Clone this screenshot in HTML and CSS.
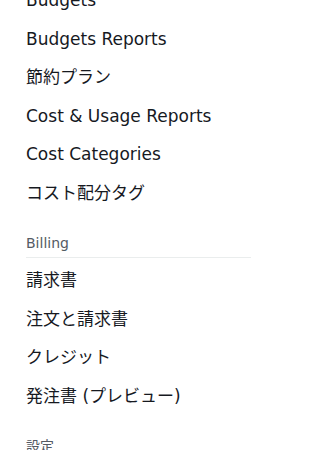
FILE: index.html
```html
<!DOCTYPE html>
<html lang="ja">
<head>
<meta charset="utf-8">
<link rel="stylesheet" href="styles.css">
</head>
<body>
<nav class="nav">
  <ul class="list">
    <li class="item">Budgets</li>
    <li class="item">Budgets Reports</li>
    <li class="item">節約プラン</li>
    <li class="item">Cost &amp; Usage Reports</li>
    <li class="item">Cost Categories</li>
    <li class="item">コスト配分タグ</li>
  </ul>
  <div class="section">
    <div class="heading">Billing</div>
    <ul class="list">
      <li class="item">請求書</li>
      <li class="item">注文と請求書</li>
      <li class="item">クレジット</li>
      <li class="item">発注書 (プレビュー)</li>
    </ul>
  </div>
  <div class="section">
    <div class="heading">設定</div>
  </div>
</nav>
</body>
</html>
```
FILE: styles.css
```css
html, body {
  margin: 0;
  padding: 0;
  background: #ffffff;
  overflow: hidden;
}
body {
  font-family: "DejaVu Sans", "Noto Sans CJK JP", sans-serif;
  color: #16191f;
}
.nav {
  width: 225px;
  margin-top: -19px;
  padding: 0 0 0 26px;
}
.list {
  list-style: none;
  margin: 0;
  padding: 0;
}
.item {
  font-size: 17px;
  line-height: 22.5px;
  padding: 8px 0;
}
.section {
  margin-top: 21px;
}
.heading {
  font-size: 14px;
  line-height: 20px;
  color: #545b64;
  padding-bottom: 4px;
  border-bottom: 1px solid #eaeded;
  margin-bottom: 3px;
}
```
